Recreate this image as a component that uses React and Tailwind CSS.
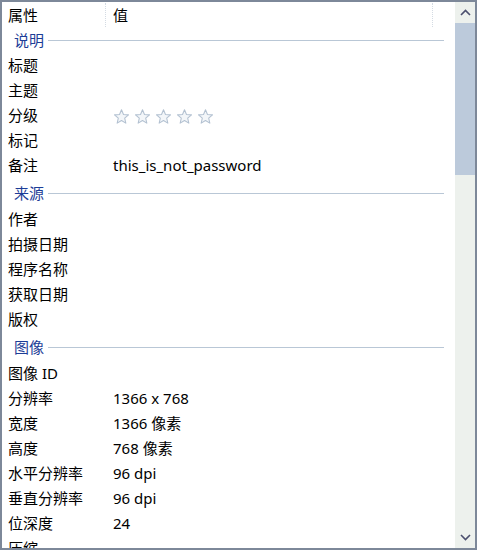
import React from 'react';

const groups = [
  { title: '说明', rows: [['标题', ''], ['主题', ''], ['分级', 'stars'], ['标记', ''], ['备注', 'this_is_not_password']] },
  { title: '来源', rows: [['作者', ''], ['拍摄日期', ''], ['程序名称', ''], ['获取日期', ''], ['版权', '']] },
  {
    title: '图像',
    rows: [
      ['图像 ID', ''],
      ['分辨率', '1366 x 768'],
      ['宽度', '1366 像素'],
      ['高度', '768 像素'],
      ['水平分辨率', '96 dpi'],
      ['垂直分辨率', '96 dpi'],
      ['位深度', '24'],
      ['压缩', ''],
    ],
  },
];

const Star = () => (
  <svg width="17" height="17" viewBox="0 0 24 24">
    <path
      d="M12 2.5l2.8 6.6 7.1.6-5.4 4.7 1.6 7-6.1-3.7-6.1 3.7 1.6-7-5.4-4.7 7.1-.6z"
      fill="#f3f6f9"
      stroke="#b3c1d1"
      strokeWidth="1.5"
      strokeLinejoin="round"
    />
  </svg>
);

const Stars = () => (
  <div className="flex gap-[4px] pt-[1px]">
    {[0, 1, 2, 3, 4].map((i) => (
      <Star key={i} />
    ))}
  </div>
);

const Chevron = ({ down }) => (
  <svg width="11" height="7" viewBox="0 0 11 7" className={down ? 'rotate-180' : ''}>
    <path d="M1 6l4.5-4.5L10 6" fill="none" stroke="#4b4f6e" strokeWidth="1.6" />
  </svg>
);

const DottedDivider = () => (
  <div className="h-[24px] w-0 border-l border-dotted border-[#d4dbe3]" />
);

export default function App() {
  return (
    <div
      className="flex h-[550px] w-[477px] overflow-hidden border-2 border-[#7d8899] bg-white text-[15px] text-black"
      style={{ fontFamily: '"Noto Sans", "Noto Sans CJK SC", sans-serif' }}
    >
      <div className="flex-1 overflow-hidden">
        <div className="flex h-[26px] items-center">
          <div className="w-[103px] pl-[6px] leading-none">属性</div>
          <DottedDivider />
          <div className="w-[326px] pl-[7px] leading-none">值</div>
          <DottedDivider />
        </div>
        {groups.map((g, gi) => (
          <div key={g.title}>
            <div
              className={`flex items-center pl-[12px] pr-[11px] ${gi ? 'mt-[2px] h-[27px]' : 'h-[25px]'}`}
            >
              <span className="leading-none text-[#1c3d97]">{g.title}</span>
              <div className="ml-[4px] h-px flex-1 bg-[#b9c7d6]" />
            </div>
            {g.rows.map(([k, v]) => (
              <div key={k} className="flex h-[25px] items-center">
                <div className="w-[105px] shrink-0 pl-[6px] leading-none">{k}</div>
                <div className="pl-[6px] leading-none">{v === 'stars' ? <Stars /> : v}</div>
              </div>
            ))}
          </div>
        ))}
      </div>
      <div className="flex w-[20px] flex-col bg-[#edf1ed]">
        <div className="flex h-[21px] items-center justify-center">
          <Chevron />
        </div>
        <div className="h-[152px] bg-[#bccadb]" />
        <div className="flex-1" />
        <div className="flex h-[21px] items-center justify-center">
          <Chevron down />
        </div>
      </div>
    </div>
  );
}
